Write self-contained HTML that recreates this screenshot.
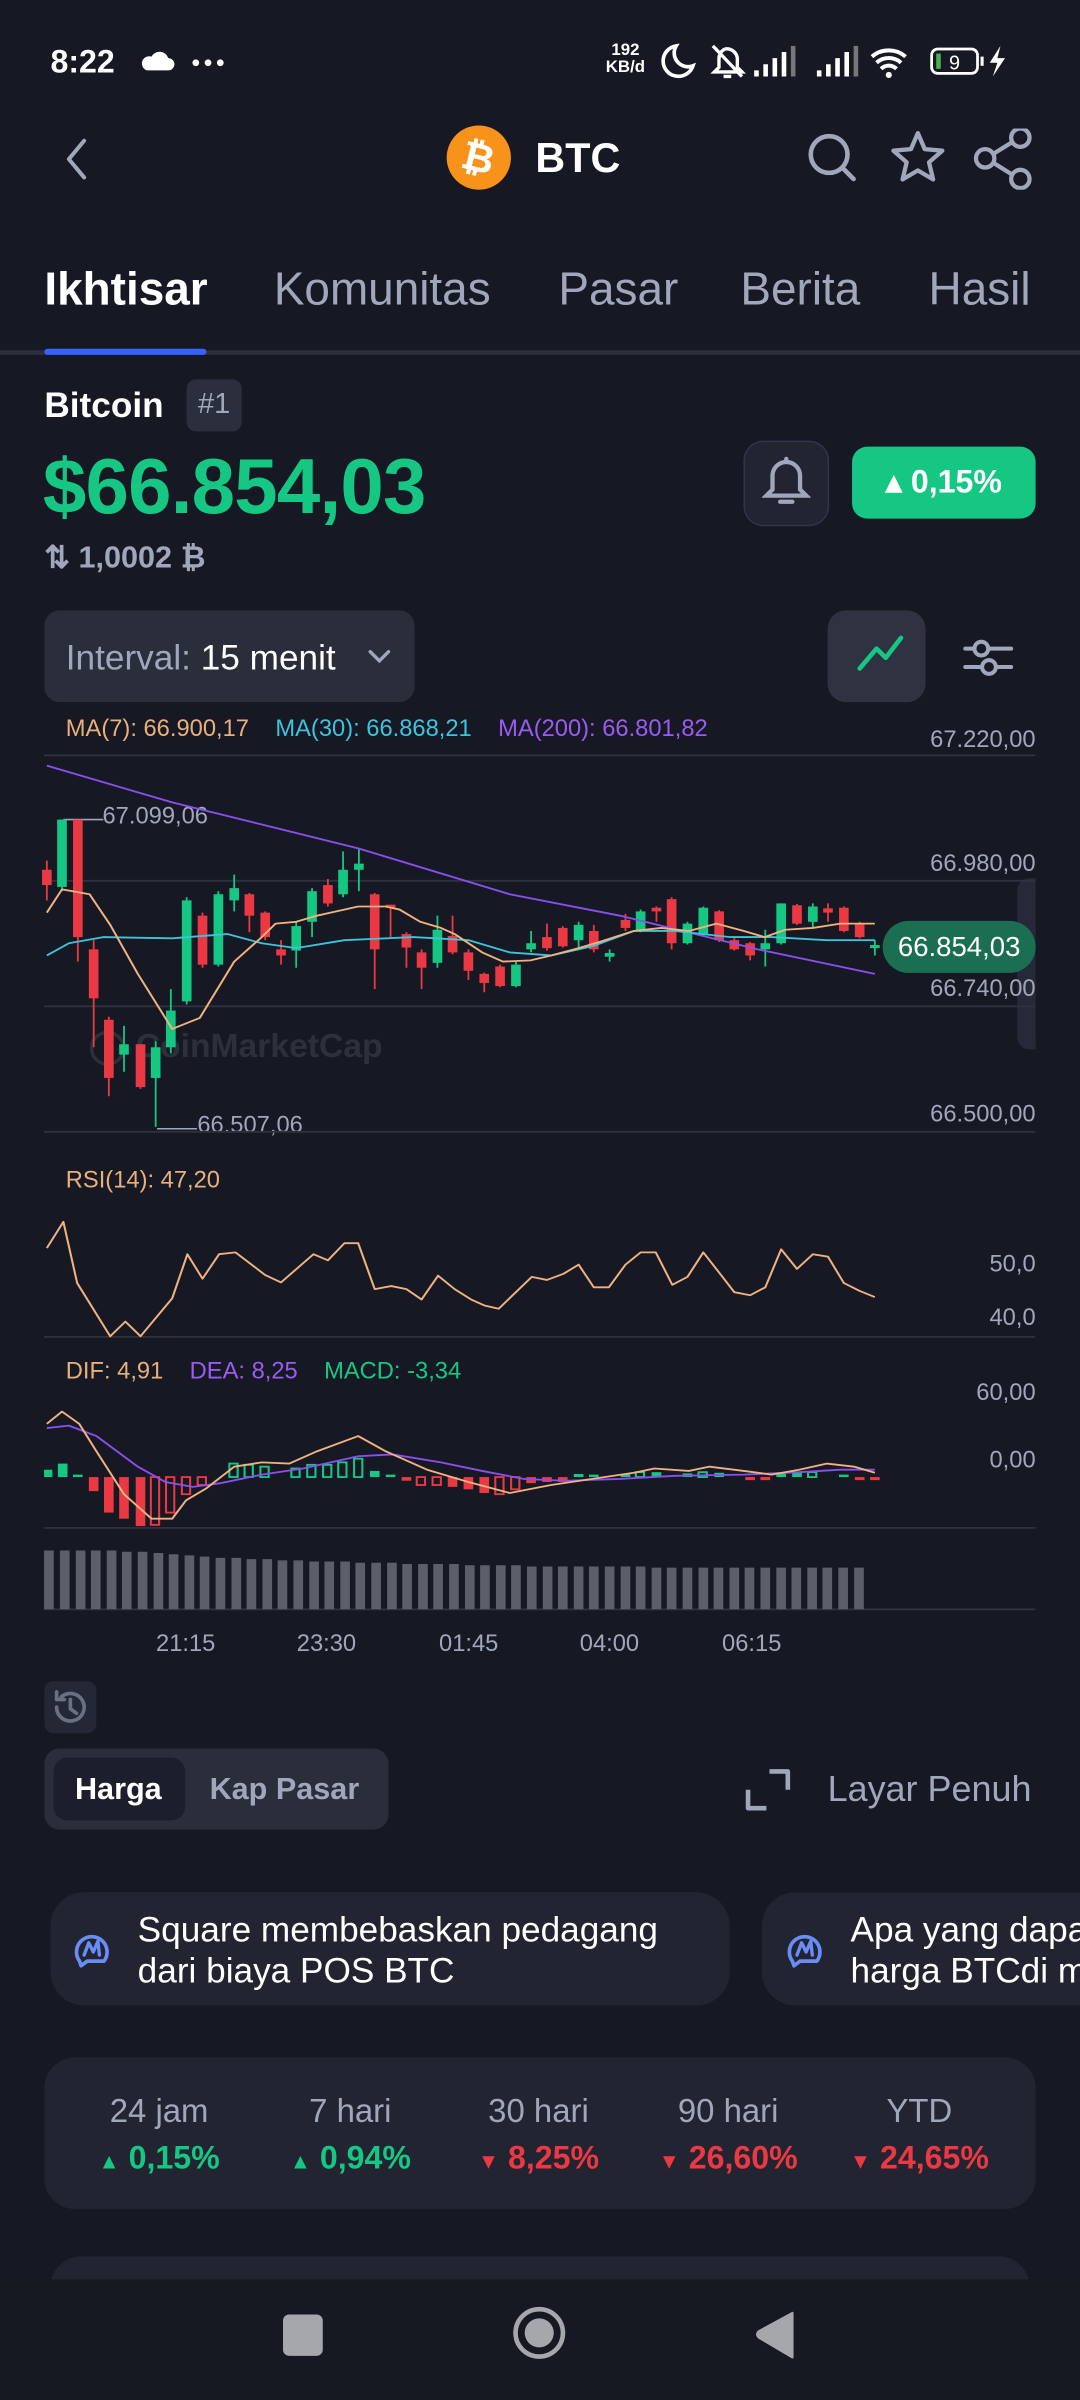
<!DOCTYPE html>
<html><head><meta charset="utf-8">
<style>
*{margin:0;padding:0;box-sizing:border-box}
html,body{width:1080px;height:2400px;overflow:hidden;background:#161924}
#r{position:absolute;left:0;top:0;width:706px;height:1569px;transform:scale(1.52975);transform-origin:0 0;font-family:"Liberation Sans",sans-serif;color:#fff}
.a{position:absolute;white-space:nowrap}
.g{color:#a1a7bb}
.t{position:absolute;line-height:1;transform:translateY(-50%);white-space:nowrap}
</style></head><body><div id="r">

<!-- status bar -->
<div class="t" style="left:33px;top:41px;font-size:21px;font-weight:bold">8:22</div>
<svg class="a" style="left:92px;top:31px" width="60" height="20" viewBox="0 0 60 20">
<path d="M4 15h14a4 4 0 0 0 0-8 6 6 0 0 0-11-1 4.5 4.5 0 0 0-3 9z" fill="#fff"/>
<circle cx="36" cy="10" r="2.2" fill="#fff"/><circle cx="44" cy="10" r="2.2" fill="#fff"/><circle cx="52" cy="10" r="2.2" fill="#fff"/></svg>
<div class="a" style="left:396px;top:28px;font-size:11px;font-weight:bold;line-height:11px;text-align:center">192<br>KB/d</div>
<svg class="a" style="left:428px;top:26px" width="250" height="28" viewBox="0 0 250 28">
<path d="M14 4a10 10 0 1 0 11 13A9 9 0 0 1 14 4z" fill="none" stroke="#fff" stroke-width="2.4"/>
<path d="M46 6a7 7 0 0 1 8 6v6l3 3H39l3-3v-6a7 7 0 0 1 4-6M45 24h5M38 4l19 20" fill="none" stroke="#fff" stroke-width="2.2"/>
<rect x="65" y="20" width="3" height="4" fill="#fff"/><rect x="71" y="16" width="3" height="8" fill="#fff"/><rect x="77" y="12" width="3" height="12" fill="#fff"/><rect x="83" y="8" width="3" height="16" fill="#fff"/><rect x="89" y="4" width="3" height="20" fill="#777"/>
<rect x="106" y="20" width="3" height="4" fill="#fff"/><rect x="112" y="16" width="3" height="8" fill="#fff"/><rect x="118" y="12" width="3" height="12" fill="#fff"/><rect x="124" y="8" width="3" height="16" fill="#fff"/><rect x="130" y="4" width="3" height="20" fill="#777"/>
<path d="M142 11a17 17 0 0 1 22 0M145 15a12 12 0 0 1 16 0M148 19a7 7 0 0 1 10 0" fill="none" stroke="#fff" stroke-width="2.6"/><circle cx="153" cy="23" r="2" fill="#fff"/>
<rect x="181" y="6" width="30" height="16" rx="4" fill="none" stroke="#fff" stroke-width="1.8"/><rect x="184" y="9" width="3" height="10" fill="#4caf50"/><text x="196" y="19.5" font-size="13" fill="#fff" text-anchor="middle" font-family="Liberation Sans">9</text><rect x="213" y="11" width="2" height="6" fill="#fff"/>
<path d="M226 4l-7 11h5l-3 9 8-12h-5z" fill="#fff"/></svg>

<!-- header -->
<svg class="a" style="left:40px;top:90px" width="20" height="28"><path d="M15 2L5 14l10 12" fill="none" stroke="#a1a7bb" stroke-width="2.6" stroke-linecap="round" stroke-linejoin="round"/></svg>
<div class="a" style="left:292px;top:82px;width:42px;height:42px;border-radius:50%;background:#f7931a;color:#fff;font-size:26px;font-weight:bold;text-align:center;line-height:42px;"><span style="display:inline-block;transform:rotate(14deg)">₿</span></div>
<div class="t" style="left:350px;top:104px;font-size:27px;font-weight:bold">BTC</div>
<svg class="a" style="left:524px;top:84px" width="160" height="40" viewBox="0 0 160 40">
<circle cx="18" cy="17" r="12" fill="none" stroke="#a1a7bb" stroke-width="3"/><path d="M27 26l7 7" stroke="#a1a7bb" stroke-width="3" stroke-linecap="round"/>
<path d="M76 3l4.5 10.5 11.5 1-8.7 7.6 2.7 11.2L76 27.4l-10 5.9 2.7-11.2L60 14.5l11.5-1z" fill="none" stroke="#a1a7bb" stroke-width="2.8" stroke-linejoin="round"/>
<circle cx="143" cy="6" r="6" fill="none" stroke="#a1a7bb" stroke-width="2.8"/><circle cx="143" cy="33" r="6" fill="none" stroke="#a1a7bb" stroke-width="2.8"/><circle cx="120" cy="19.5" r="6" fill="none" stroke="#a1a7bb" stroke-width="2.8"/><path d="M125.5 16.5l12-7.5M125.5 22.5l12 7.5" stroke="#a1a7bb" stroke-width="2.8"/></svg>

<!-- tabs -->
<div class="t" style="left:29px;top:190px;font-size:30px;font-weight:bold">Ikhtisar</div>
<div class="t g" style="left:179px;top:190px;font-size:30px">Komunitas</div>
<div class="t g" style="left:365px;top:190px;font-size:30px">Pasar</div>
<div class="t g" style="left:484px;top:190px;font-size:30px">Berita</div>
<div class="t g" style="left:607px;top:190px;font-size:30px">Hasil</div>
<div class="a" style="left:0;top:229px;width:706px;height:3px;background:#2b2f3b"></div>
<div class="a" style="left:29px;top:228px;width:106px;height:4px;background:#3861fb;border-radius:2px"></div>

<!-- coin info -->
<div class="t" style="left:29px;top:265px;font-size:23px;font-weight:bold">Bitcoin</div>
<div class="a g" style="left:122px;top:248px;width:36px;height:34px;background:#2b2f3d;border-radius:6px;font-size:19px;text-align:center;line-height:34px">#1</div>
<div class="t" style="left:28px;top:318px;font-size:51px;font-weight:bold;color:#16c784;letter-spacing:-0.5px">$66.854,03</div>
<div class="a" style="left:486px;top:288px;width:56px;height:56px;background:#222531;border:1.5px solid #30344a;border-radius:13px"></div>
<svg class="a" style="left:498px;top:298px" width="32" height="36" viewBox="0 0 32 36"><path d="M16 4a9 9 0 0 1 9 9v9l4 4H3l4-4v-9a9 9 0 0 1 9-9zM16 2v2M12 30h8" fill="none" stroke="#a1a7bb" stroke-width="2.8" stroke-linecap="round"/></svg>
<div class="a" style="left:557px;top:292px;width:120px;height:47px;background:#16c784;border-radius:10px;font-size:21px;text-align:center;line-height:47px;font-weight:bold">▴ 0,15%</div>
<div class="t g" style="left:29px;top:365px;font-size:20px;font-weight:bold">⇅ 1,0002 ₿</div>

<!-- interval -->
<div class="a" style="left:29px;top:399px;width:242px;height:60px;background:#2a2d3a;border-radius:10px"></div>
<div class="t" style="left:43px;top:430px;font-size:23px"><span class="g">Interval:</span> 15 menit</div>
<svg class="a" style="left:239px;top:422px" width="18" height="14"><path d="M3 4l6 6 6-6" fill="none" stroke="#a1a7bb" stroke-width="2.2" stroke-linecap="round"/></svg>
<div class="a" style="left:541px;top:399px;width:64px;height:60px;background:#2f3241;border-radius:12px"></div>
<svg class="a" style="left:541px;top:399px" width="64" height="60"><path d="M21 38l11-13 6 6 10-13" fill="none" stroke="#16c784" stroke-width="3" stroke-linecap="round" stroke-linejoin="round"/></svg>
<svg class="a" style="left:627px;top:410px" width="40" height="40"><g stroke="#a1a7bb" stroke-width="2.6" fill="none" stroke-linecap="round"><path d="M4 14h5M20 14h14M4 26h10M25 26h9"/><circle cx="14.5" cy="14" r="4.5"/><circle cx="19.5" cy="26" r="4.5"/></g></svg>

<!-- chart labels -->
<div class="a" style="left:665px;top:574px;width:12px;height:112px;background:#262938;border-radius:8px 0 0 8px"></div>
<div class="t" style="left:43px;top:477px;font-size:15.5px"><span style="color:#e9b07c">MA(7): 66.900,17</span>&nbsp;&nbsp;&nbsp;&nbsp;<span style="color:#3fc3dd">MA(30): 66.868,21</span>&nbsp;&nbsp;&nbsp;&nbsp;<span style="color:#9a5cf0">MA(200): 66.801,82</span></div>
<div class="t g" style="right:29px;top:484px;font-size:15.5px">67.220,00</div>
<div class="t g" style="right:29px;top:565px;font-size:15.5px">66.980,00</div>
<div class="t g" style="right:29px;top:647px;font-size:15.5px">66.740,00</div>
<div class="t g" style="right:29px;top:729px;font-size:15.5px">66.500,00</div>
<div class="t g" style="left:67px;top:534px;font-size:15.5px">67.099,06</div>
<div class="t g" style="left:129px;top:736px;font-size:15.5px">66.507,06</div>
<div class="t" style="left:58px;top:684px;font-size:22px;font-weight:bold;color:rgba(200,205,220,0.13)">◯ CoinMarketCap</div>
<div class="a" style="left:577px;top:602px;width:100px;height:34px;background:#1c6e52;border-radius:17px;font-size:18px;text-align:center;line-height:34px">66.854,03</div>
<div class="t" style="left:43px;top:772px;font-size:15.5px;color:#e9b07c">RSI(14): 47,20</div>
<div class="t g" style="right:29px;top:827px;font-size:15.5px">50,0</div>
<div class="t g" style="right:29px;top:862px;font-size:15.5px">40,0</div>
<div class="t" style="left:43px;top:897px;font-size:15.5px"><span style="color:#e9b07c">DIF: 4,91</span>&nbsp;&nbsp;&nbsp;&nbsp;<span style="color:#9a5cf0">DEA: 8,25</span>&nbsp;&nbsp;&nbsp;&nbsp;<span style="color:#16c784">MACD: -3,34</span></div>
<div class="t g" style="right:29px;top:911px;font-size:15.5px">60,00</div>
<div class="t g" style="right:29px;top:955px;font-size:15.5px">0,00</div>
<div class="t g" style="left:102px;top:1075px;font-size:15.5px">21:15</div>
<div class="t g" style="left:194px;top:1075px;font-size:15.5px">23:30</div>
<div class="t g" style="left:287px;top:1075px;font-size:15.5px">01:45</div>
<div class="t g" style="left:379px;top:1075px;font-size:15.5px">04:00</div>
<div class="t g" style="left:472px;top:1075px;font-size:15.5px">06:15</div>

<svg class="a" style="left:0;top:0" width="706" height="1569" viewBox="0 0 706 1569">
<g transform="translate(0,444.5) scale(0.4503,0.4002)">
<g stroke="#2e3240" stroke-width="3"><path d="M64 123H1503M64 328H1503M64 533H1503M64 738H1503M64 1073H1503M64 1385H1503M64 1518H1503"/></g>
<path d="M92 228H150M228 733H286" stroke="#a1a7bb" stroke-width="2.5" fill="none"/>
<g fill="#16c784"><rect x="83" y="228" width="14" height="110"/><rect x="173" y="595" width="14" height="17"/><rect x="219" y="600" width="14" height="50"/><rect x="241" y="540" width="14" height="60"/><rect x="264" y="360" width="14" height="165"/><rect x="310" y="350" width="14" height="115"/><rect x="333" y="340" width="14" height="20"/><rect x="423" y="402" width="14" height="40"/><rect x="446" y="345" width="14" height="50"/><rect x="491" y="310" width="14" height="40"/><rect x="514" y="300" width="14" height="10"/><rect x="628" y="408" width="14" height="54"/><rect x="742" y="465" width="14" height="35"/><rect x="764" y="430" width="14" height="10"/><rect x="833" y="400" width="14" height="25"/><rect x="878" y="446" width="14" height="6"/><rect x="923" y="378" width="14" height="32"/><rect x="991" y="398" width="14" height="32"/><rect x="1014" y="372" width="14" height="43"/><rect x="1104" y="430" width="14" height="10"/><rect x="1127" y="365" width="14" height="65"/><rect x="1173" y="370" width="14" height="25"/><rect x="1263" y="433" width="14" height="5"/></g>
<path stroke="#16c784" stroke-width="2.6" d="M90 228V345M180 565V640M226 590V730M248 505V610M271 355V530M317 345V468M340 318V378M430 395V470M453 340V420M498 280V355M521 275V345M635 385V470M749 460V502M771 410V445M840 395V440M885 440V460M930 375V412M998 395V432M1021 370V418M1111 408V468M1134 365V432M1180 365V405M1270 425V450"/>
<g fill="#ea3943"><rect x="61" y="310" width="14" height="25"/><rect x="106" y="228" width="14" height="192"/><rect x="129" y="440" width="14" height="80"/><rect x="151" y="555" width="14" height="95"/><rect x="197" y="595" width="14" height="70"/><rect x="287" y="385" width="14" height="80"/><rect x="355" y="350" width="14" height="35"/><rect x="378" y="380" width="14" height="40"/><rect x="401" y="440" width="14" height="10"/><rect x="469" y="335" width="14" height="30"/><rect x="537" y="350" width="14" height="90"/><rect x="560" y="367" width="14" height="5"/><rect x="583" y="415" width="14" height="22"/><rect x="605" y="445" width="14" height="25"/><rect x="650" y="418" width="14" height="27"/><rect x="673" y="445" width="14" height="30"/><rect x="696" y="480" width="14" height="15"/><rect x="719" y="468" width="14" height="32"/><rect x="787" y="420" width="14" height="18"/><rect x="810" y="405" width="14" height="30"/><rect x="855" y="410" width="14" height="30"/><rect x="901" y="392" width="14" height="13"/><rect x="946" y="372" width="14" height="6"/><rect x="968" y="358" width="14" height="72"/><rect x="1037" y="378" width="14" height="47"/><rect x="1059" y="425" width="14" height="15"/><rect x="1082" y="430" width="14" height="20"/><rect x="1150" y="368" width="14" height="30"/><rect x="1195" y="373" width="14" height="7"/><rect x="1218" y="372" width="14" height="38"/><rect x="1241" y="398" width="14" height="22"/></g>
<path stroke="#ea3943" stroke-width="2.6" d="M68 295V360M113 228V460M136 425V600M158 550V680M204 595V668M294 380V470M362 348V412M385 378V425M408 425V465M476 325V370M544 348V505M567 368V420M590 412V470M612 440V505M657 385V448M680 440V490M703 478V510M726 465V502M794 398V442M817 402V437M862 400V445M908 382V410M953 370V395M975 355V440M1044 376V428M1066 420V442M1089 428V458M1157 366V400M1202 365V395M1225 370V412M1248 395V422"/>
<g fill="none" stroke-width="3" stroke-linejoin="round">
<path stroke="#8a4ff0" d="M68 140L250 200 520 275 740 350 900 385 1100 440 1270 480"/>
<path stroke="#3fc3dd" d="M68 450L100 430 150 420 250 422 330 415 380 430 430 438 500 425 600 420 680 425 740 445 800 450 860 435 920 410 980 410 1060 420 1120 420 1200 425 1270 425"/>
<path stroke="#f0b27f" d="M68 380L90 342 130 350 160 400 200 480 250 570 290 552 340 460 380 420 400 398 430 395 460 385 480 380 520 370 560 370 580 375 610 395 640 405 660 415 700 445 730 460 770 458 800 450 840 438 870 428 920 410 960 405 1000 410 1040 398 1080 410 1110 420 1140 408 1180 405 1220 398 1270 398"/>
<path stroke="#f0b27f" d="M68 928L92 885 112 985 160 1072 182 1048 204 1072 250 1010 272 938 294 978 318 938 342 935 385 972 408 984 455 938 476 948 500 920 520 920 544 995 568 990 590 995 612 1012 636 973 660 995 684 1012 704 1022 724 1027 772 975 794 980 818 970 840 955 862 992 884 992 908 955 930 935 952 935 976 988 998 975 1021 935 1044 968 1066 1000 1089 1005 1111 992 1134 930 1157 962 1180 938 1202 942 1225 985 1248 998 1270 1008"/>
</g>
<g fill="#16c784"><rect x="64" y="1290" width="12" height="12"/><rect x="84" y="1280" width="14" height="22"/><rect x="106" y="1298" width="14" height="4"/><rect x="537" y="1292" width="14" height="10"/><rect x="560" y="1298" width="14" height="4"/><rect x="833" y="1297" width="14" height="5"/><rect x="855" y="1298" width="14" height="4"/><rect x="901" y="1297" width="14" height="5"/><rect x="946" y="1294" width="14" height="8"/><rect x="991" y="1296" width="14" height="6"/><rect x="1037" y="1295" width="14" height="7"/><rect x="1127" y="1294" width="14" height="8"/><rect x="1150" y="1294" width="14" height="8"/><rect x="1218" y="1298" width="14" height="4"/></g>
<g fill="none" stroke="#16c784" stroke-width="3"><rect x="333" y="1280" width="12" height="22"/><rect x="355" y="1282" width="12" height="20"/><rect x="378" y="1285" width="12" height="17"/><rect x="423" y="1288" width="12" height="14"/><rect x="446" y="1282" width="12" height="20"/><rect x="469" y="1282" width="12" height="20"/><rect x="491" y="1278" width="12" height="24"/><rect x="514" y="1272" width="12" height="30"/><rect x="923" y="1294" width="12" height="8"/><rect x="1014" y="1294" width="12" height="8"/><rect x="1173" y="1294" width="12" height="8"/></g>
<g fill="#ea3943"><rect x="129" y="1302" width="14" height="23"/><rect x="151" y="1302" width="14" height="58"/><rect x="173" y="1302" width="14" height="68"/><rect x="197" y="1302" width="14" height="80"/><rect x="583" y="1302" width="14" height="6"/><rect x="650" y="1302" width="14" height="16"/><rect x="673" y="1302" width="14" height="20"/><rect x="696" y="1302" width="14" height="26"/><rect x="764" y="1302" width="14" height="10"/><rect x="787" y="1302" width="14" height="8"/><rect x="810" y="1302" width="14" height="8"/><rect x="1082" y="1302" width="14" height="5"/><rect x="1104" y="1302" width="14" height="5"/><rect x="1241" y="1302" width="14" height="5"/><rect x="1263" y="1302" width="14" height="5"/></g>
<g fill="none" stroke="#ea3943" stroke-width="3"><rect x="219" y="1302" width="12" height="78"/><rect x="241" y="1302" width="12" height="58"/><rect x="264" y="1302" width="12" height="28"/><rect x="287" y="1302" width="12" height="13"/><rect x="605" y="1302" width="12" height="13"/><rect x="628" y="1302" width="12" height="13"/><rect x="719" y="1302" width="12" height="28"/><rect x="742" y="1302" width="12" height="20"/></g>
<g fill="none" stroke-width="3" stroke-linejoin="round">
<path stroke="#8a4ff0" d="M68 1222L100 1218 140 1235 200 1285 240 1310 280 1318 320 1312 380 1298 440 1288 520 1268 570 1265 640 1278 700 1292 760 1305 820 1308 900 1305 980 1300 1080 1298 1160 1294 1220 1290 1270 1290"/>
<path stroke="#f0b27f" d="M68 1215L90 1195 115 1215 140 1260 180 1330 220 1370 250 1370 270 1340 300 1320 340 1285 380 1278 420 1280 460 1260 520 1235 560 1260 620 1290 680 1310 740 1328 800 1315 860 1305 920 1295 950 1288 1000 1292 1030 1285 1080 1292 1120 1298 1160 1290 1200 1280 1240 1285 1270 1295"/>
</g>
<path fill="#5b5f6c" d="M64 1422h14v96h-14zM87 1422h14v96h-14zM110 1422h14v96h-14zM132 1422h14v96h-14zM155 1422h14v96h-14zM177 1424h14v94h-14zM200 1424h14v94h-14zM223 1426h14v92h-14zM245 1428h14v90h-14zM268 1430h14v88h-14zM290 1432h14v86h-14zM313 1434h14v84h-14zM336 1434h14v84h-14zM358 1436h14v82h-14zM381 1436h14v82h-14zM403 1438h14v80h-14zM426 1438h14v80h-14zM449 1440h14v78h-14zM471 1440h14v78h-14zM494 1440h14v78h-14zM516 1442h14v76h-14zM539 1442h14v76h-14zM562 1442h14v76h-14zM584 1444h14v74h-14zM607 1444h14v74h-14zM629 1444h14v74h-14zM652 1444h14v74h-14zM675 1446h14v72h-14zM697 1446h14v72h-14zM720 1446h14v72h-14zM742 1446h14v72h-14zM765 1448h14v70h-14zM788 1448h14v70h-14zM810 1448h14v70h-14zM833 1448h14v70h-14zM855 1448h14v70h-14zM878 1448h14v70h-14zM901 1448h14v70h-14zM923 1448h14v70h-14zM946 1450h14v68h-14zM968 1450h14v68h-14zM991 1450h14v68h-14zM1014 1450h14v68h-14zM1036 1450h14v68h-14zM1059 1450h14v68h-14zM1081 1450h14v68h-14zM1104 1450h14v68h-14zM1127 1450h14v68h-14zM1149 1450h14v68h-14zM1172 1450h14v68h-14zM1194 1450h14v68h-14zM1217 1450h14v68h-14zM1240 1450h14v68h-14z"/>
</g></svg>

<!-- history / toggles -->
<div class="a" style="left:29px;top:1099px;width:34px;height:34px;background:#242735;border-radius:6px"></div>
<svg class="a" style="left:31px;top:1101px" width="30" height="30" viewBox="0 0 30 30"><path d="M6 15a9 9 0 1 0 3-6.7M6 5v5h5M15 10v6l4 3" fill="none" stroke="#6b7080" stroke-width="2.4" stroke-linecap="round" stroke-linejoin="round"/></svg>
<div class="a" style="left:29px;top:1143px;width:225px;height:53px;background:#2a2d3a;border-radius:10px"></div>
<div class="a" style="left:35px;top:1149px;width:86px;height:41px;background:#1c1f2b;border-radius:9px"></div>
<div class="t" style="left:49px;top:1170px;font-size:20px;font-weight:bold">Harga</div>
<div class="t g" style="left:137px;top:1170px;font-size:20px;font-weight:bold">Kap Pasar</div>
<svg class="a" style="left:485px;top:1154px" width="34" height="34"><path d="M4 16v12h12M18 4h12v12" fill="none" stroke="#a1a7bb" stroke-width="3" stroke-linejoin="round"/></svg>
<div class="t g" style="left:541px;top:1170px;font-size:23.5px">Layar Penuh</div>

<!-- news -->
<div class="a" style="left:33px;top:1237px;width:444px;height:74px;background:#222531;border-radius:22px"></div>
<div class="a" style="left:498px;top:1237px;width:260px;height:74px;background:#222531;border-radius:22px"></div>
<svg class="a" style="left:46px;top:1260px" width="28" height="28" viewBox="0 0 28 28"><path d="M6 22A10 10 0 1 1 22 22H11l-4 3z" fill="none" stroke="#6a8cf7" stroke-width="2.4" stroke-linejoin="round"/><path d="M9 18l3-8 3 6 3-7 1 9" fill="none" stroke="#6a8cf7" stroke-width="2.2" stroke-linecap="round" stroke-linejoin="round"/></svg>
<svg class="a" style="left:512px;top:1260px" width="28" height="28" viewBox="0 0 28 28"><path d="M6 22A10 10 0 1 1 22 22H11l-4 3z" fill="none" stroke="#6a8cf7" stroke-width="2.4" stroke-linejoin="round"/><path d="M9 18l3-8 3 6 3-7 1 9" fill="none" stroke="#6a8cf7" stroke-width="2.2" stroke-linecap="round" stroke-linejoin="round"/></svg>
<div class="a" style="left:90px;top:1248px;font-size:23px;line-height:27px">Square membebaskan pedagang<br>dari biaya POS BTC</div>
<div class="a" style="left:556px;top:1248px;font-size:23px;line-height:27px">Apa yang dapat<br>harga BTCdi m</div>

<!-- stats -->
<div class="a" style="left:29px;top:1345px;width:648px;height:99px;background:#222531;border-radius:20px"></div>
<div class="t g" style="left:104px;top:1381px;font-size:21.5px;transform:translate(-50%,-50%)">24 jam</div>
<div class="t g" style="left:229px;top:1381px;font-size:21.5px;transform:translate(-50%,-50%)">7 hari</div>
<div class="t g" style="left:352px;top:1381px;font-size:21.5px;transform:translate(-50%,-50%)">30 hari</div>
<div class="t g" style="left:476px;top:1381px;font-size:21.5px;transform:translate(-50%,-50%)">90 hari</div>
<div class="t g" style="left:601px;top:1381px;font-size:21.5px;transform:translate(-50%,-50%)">YTD</div>
<div class="t" style="left:104px;top:1411px;font-size:21px;font-weight:bold;color:#16c784;transform:translate(-50%,-50%)"><span style="font-size:14px">▲</span> 0,15%</div>
<div class="t" style="left:229px;top:1411px;font-size:21px;font-weight:bold;color:#16c784;transform:translate(-50%,-50%)"><span style="font-size:14px">▲</span> 0,94%</div>
<div class="t" style="left:352px;top:1411px;font-size:21px;font-weight:bold;color:#ea3943;transform:translate(-50%,-50%)"><span style="font-size:14px">▼</span> 8,25%</div>
<div class="t" style="left:476px;top:1411px;font-size:21px;font-weight:bold;color:#ea3943;transform:translate(-50%,-50%)"><span style="font-size:14px">▼</span> 26,60%</div>
<div class="t" style="left:601px;top:1411px;font-size:21px;font-weight:bold;color:#ea3943;transform:translate(-50%,-50%)"><span style="font-size:14px">▼</span> 24,65%</div>

<div class="a" style="left:33px;top:1475px;width:640px;height:30px;background:#222531;border-radius:20px 20px 0 0"></div>
<div class="a" style="left:0;top:1490px;width:706px;height:79px;background:#161922"></div>
<div class="a" style="left:185px;top:1513px;width:26px;height:27px;background:#a5a7ad;border-radius:4px"></div>
<svg class="a" style="left:333px;top:1505px" width="40" height="40"><circle cx="19.5" cy="20" r="15.5" fill="none" stroke="#a5a7ad" stroke-width="3"/><circle cx="19.5" cy="20" r="9.5" fill="#a5a7ad"/></svg>
<svg class="a" style="left:490px;top:1510px" width="32" height="34"><path d="M28 2V31L6 18Q4 16 6 14Z" fill="#a5a7ad" stroke="#a5a7ad" stroke-width="1.5" stroke-linejoin="round"/></svg>
</div></body></html>
